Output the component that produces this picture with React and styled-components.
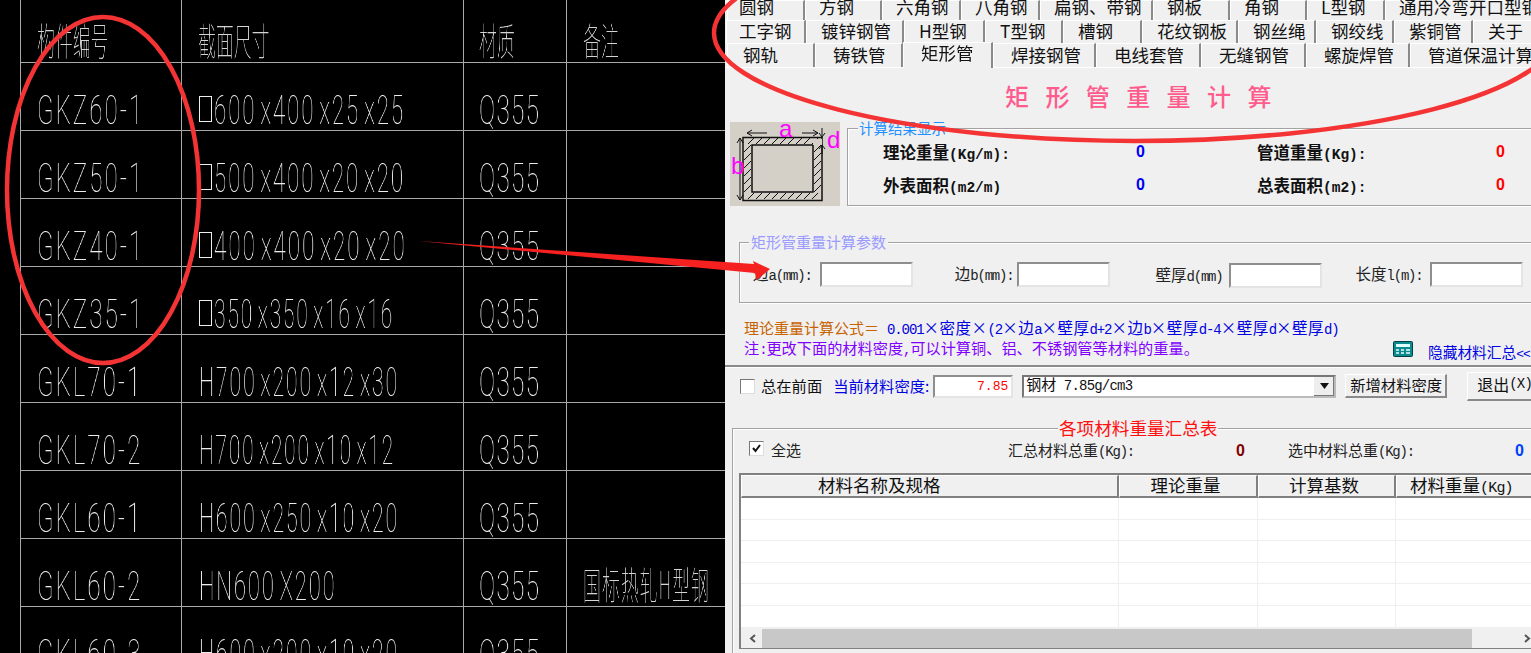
import React from "react";
import styled, { createGlobalStyle } from "styled-components";

const CJK = '"Noto Sans CJK SC", sans-serif';

const Global = createGlobalStyle`
  html, body { margin: 0; padding: 0; background: #000; }
  body { width: 1531px; height: 653px; overflow: hidden; font-family: ${CJK}; }
`;

const Page = styled.div`
  position: relative;
  display: flex;
  width: 1531px;
  height: 653px;
  overflow: hidden;
`;

/* ---------- CAD drawing table ---------- */
const Sheet = styled.div`
  flex: none;
  width: 725px;
  height: 653px;
  box-sizing: border-box;
  padding-left: 20px;
  background: #000;
  overflow: hidden;
  display: grid;
  grid-template-columns: 161px 282px 103px 159px;
  grid-auto-rows: 68px;
  grid-template-rows: 63px;
  align-content: start;
`;
const Cell = styled.div`
  box-sizing: border-box;
  border-left: 1px solid #a8a8a8;
  border-bottom: 1px solid #a8a8a8;
  padding-left: ${(p) => p.$pad}px;
  display: flex;
  align-items: flex-end;
  white-space: nowrap;
  min-width: 0;
`;
const HeadText = styled.span`
  display: block;
  font-family: ${CJK};
  font-weight: 100;
  font-size: 38px;
  line-height: 40px;
  letter-spacing: ${(p) => p.$ls ?? 0}px;
  color: #d4d4d4;
  margin-bottom: 3px;
  transform: scaleX(0.47);
  transform-origin: left center;
  will-change: transform;
`;
const CadText = styled.span`
  display: block;
  font-family: Roboto, "Noto Sans CJK SC", sans-serif;
  font-weight: 100;
  font-size: 40px;
  line-height: 36px;
  letter-spacing: ${(p) => p.$ls ?? 3.5}px;
  word-spacing: -6px;
  color: #ececec;
  margin-bottom: 1px;
  transform: scaleX(${(p) => p.$sx ?? 0.6});
  transform-origin: left center;
  will-change: transform;
`;
const SectionWrap = styled.span`
  display: flex;
  align-items: flex-end;
`;
const SquareMark = styled.span`
  flex: none;
  width: 11px;
  height: 24px;
  border: 1px solid #eee;
  margin: 0 2px 8px 0;
`;

/* ---------- Dialog ---------- */
const Dialog = styled.div`
  flex: none;
  width: 806px;
  height: 653px;
  background: #f0f0f0;
  overflow: hidden;
  display: flex;
  flex-direction: column;
  color: #000;
`;
const TabStrip = styled.div`
  flex: none;
  height: 67px;
  display: flex;
  flex-direction: column;
  border-bottom: 1px solid #fff;
`;
const TabRow = styled.div`
  flex: none;
  height: ${(p) => p.$h}px;
  display: flex;
  padding-left: ${(p) => p.$start}px;
  align-items: flex-end;
`;
const Tab = styled.div`
  flex: none;
  box-sizing: border-box;
  width: ${(p) => p.$w}px;
  height: ${(p) => (p.$active ? "calc(100% + 2px)" : "100%")};
  margin-bottom: ${(p) => (p.$active ? "-1px" : "0")};
  padding-left: ${(p) => p.$pad}px;
  padding-bottom: ${(p) => (p.$active ? 0 : p.$pb)}px;
  border-top: 1px solid #fff;
  border-left: 1px solid #fff;
  border-right: 2px solid #8a8a8a;
  font-size: 17.5px;
  line-height: ${(p) => (p.$active ? 20 : 22)}px;
  white-space: nowrap;
  color: #111;
  position: relative;
  z-index: ${(p) => (p.$active ? 1 : 0)};
  background: #f0f0f0;
  display: flex;
  align-items: ${(p) => (p.$active ? "flex-start" : "flex-end")};
  font-family: ${CJK};
  &:first-child { padding-left: ${(p) => p.$pad - 2}px; }
`;
const Title = styled.div`
  flex: none;
  height: 54px;
  padding-left: 280px;
  box-sizing: border-box;
  display: flex;
  align-items: center;
  font-family: ${CJK};
  font-size: 24px;
  font-weight: 500;
  letter-spacing: 16.4px;
  color: #ff5c8d;
`;
const ResultRow = styled.div`
  flex: none;
  height: 84px;
  display: flex;
  padding-left: 5px;
  gap: 7px;
`;
const Diagram = styled.svg`
  flex: none;
  width: 110px;
  height: 84px;
`;
const Group = styled.div`
  position: relative;
  box-sizing: border-box;
  border: 1px solid #a2a2a2;
  box-shadow: inset 1px 1px 0 #fff, 1px 1px 0 #fff;
`;
const ResultGroup = styled(Group)`
  flex: none;
  width: 720px;
  height: 78px;
  margin-top: 6px;
  display: grid;
  grid-template-columns: 374px 1fr;
  grid-template-rows: 33px 33px;
  padding: 6px 0 0 35px;
`;
const Legend = styled.span`
  position: absolute;
  top: -11px;
  left: ${(p) => p.$left}px;
  padding: 0 ${(p) => p.$px ?? 1}px;
  background: #f0f0f0;
  font-family: ${CJK};
  font-size: ${(p) => p.$size}px;
  line-height: 20px;
  white-space: nowrap;
  color: ${(p) => p.$color};
`;
const Lat = styled.span`
  font-family: "Liberation Mono", monospace;
  font-size: ${(p) => p.$size}px;
  letter-spacing: ${(p) => p.$ls}px;
`;
const Stat = styled.div`
  display: flex;
  align-items: center;
  font-family: ${CJK};
  font-size: 16.5px;
  font-weight: 700;
  color: #111;
  white-space: nowrap;
`;
const StatLabel = styled.span`
  flex: none;
  width: ${(p) => p.$w}px;
`;
const StatValue = styled.span`
  font-family: "Liberation Sans", sans-serif;
  font-size: 16px;
  color: ${(p) => p.$color};
`;
const ParamGroup = styled(Group)`
  flex: none;
  width: 800px;
  height: 61px;
  margin: 36px 0 0 14px;
  padding: 19px 0 0 13px;
  display: flex;
  align-items: flex-start;
`;
const Field = styled.div`
  flex: none;
  display: flex;
  align-items: center;
  gap: ${(p) => p.$gap}px;
  margin-left: ${(p) => p.$ml}px;
  margin-top: ${(p) => p.$mt ?? 0}px;
`;
const FieldLabel = styled.span`
  font-family: ${CJK};
  font-size: 15.5px;
  line-height: 22px;
  color: #222;
  white-space: nowrap;
`;
const Sunken = styled.div`
  box-sizing: border-box;
  background: #fff;
  border: 2px solid;
  border-color: #8e8e8e #e4e4e4 #e4e4e4 #8e8e8e;
`;
const ParamInput = styled(Sunken)`
  width: 93px;
  height: 25px;
`;
const Notes = styled.div`
  flex: none;
  height: 62px;
  padding: 14px 0 0 19px;
  box-sizing: border-box;
  position: relative;
  font-family: ${CJK};
  font-size: 15.5px;
  white-space: nowrap;
`;
const NoteLine = styled.div`
  height: 20px;
  line-height: 20px;
  color: ${(p) => p.$color};
  font-size: ${(p) => p.$size ?? 15.5}px;
`;
const Orange = styled.span`
  color: #c86400;
  font-size: 15px;
  margin-right: 8px;
`;
const Formula = styled.span`
  letter-spacing: 0.5px;
`;
const HideLink = styled.div`
  position: absolute;
  left: 668px;
  top: 38px;
  display: flex;
  align-items: flex-start;
  gap: 15px;
  color: #0000e0;
  font-size: 14.7px;
  line-height: 21px;
  font-family: ${CJK};
`;
const CalcIcon = styled.svg`
  flex: none;
  width: 20px;
  height: 16px;
`;
const Toolbar = styled.div`
  flex: none;
  height: 40px;
  border-top: 2px solid #8a8a8a;
  box-shadow: inset 0 1px 0 #fff;
  box-sizing: border-box;
  padding: 0 0 0 15px;
  display: flex;
  align-items: center;
  font-size: 15.3px;
  font-family: ${CJK};
  white-space: nowrap;
`;
const CheckBox = styled.span`
  flex: none;
  box-sizing: border-box;
  width: ${(p) => p.$size}px;
  height: ${(p) => p.$size}px;
  background: #fff;
  border: 1px solid;
  border-color: #777 #ddd #ddd #777;
  display: flex;
  align-items: center;
  justify-content: center;
`;
const ToolLabel = styled.span`
  color: ${(p) => p.$color ?? "#111"};
  margin-left: ${(p) => p.$ml}px;
  padding-bottom: 2px;
  font-family: ${CJK};
  font-size: 15.3px;
`;
const Density = styled(Sunken)`
  flex: none;
  width: 80px;
  height: 23px;
  margin-left: 4px;
  padding-right: 3px;
  text-align: right;
  color: #f00;
  font-family: "Liberation Mono", monospace;
  font-size: 13px;
  line-height: 19px;
`;
const Select = styled(Sunken)`
  flex: none;
  width: 314px;
  height: 23px;
  margin-left: 9px;
  display: flex;
  align-items: center;
  justify-content: space-between;
  font-family: ${CJK};
  font-size: 15px;
  color: #111;
  padding-left: 2px;
  border-color: #777 #bbb #bbb #777;
`;
const SelectText = styled.span`
  line-height: 18px;
  padding-bottom: 3px;
`;
const SelectArrow = styled.span`
  flex: none;
  width: 20px;
  height: 19px;
  background: #eee;
  border-left: 1px solid #fff;
  box-shadow: inset -1px -1px 0 #777;
  display: flex;
  align-items: center;
  justify-content: center;
`;
const Button = styled.div`
  flex: none;
  box-sizing: border-box;
  width: ${(p) => p.$w}px;
  height: ${(p) => p.$h}px;
  margin-left: ${(p) => p.$ml}px;
  background: #f0f0f0;
  border-top: 1px solid #fff;
  border-left: 1px solid #fff;
  border-right: 2px solid #8a8a8a;
  border-bottom: 2px solid #8a8a8a;
  display: flex;
  align-items: center;
  padding: 0 0 3px ${(p) => p.$pad}px;
  font-family: ${CJK};
  font-size: ${(p) => p.$size}px;
  color: #111;
  white-space: nowrap;
`;
const SummaryGroup = styled(Group)`
  flex: none;
  width: 830px;
  height: 240px;
  margin: 23px 0 0 7px;
  padding-top: 12px;
`;
const SummaryTop = styled.div`
  height: 32px;
  padding-left: 16px;
  display: flex;
  align-items: flex-start;
  font-family: ${CJK};
  font-size: 15px;
  white-space: nowrap;
`;
const SummaryLabel = styled.span`
  margin-left: ${(p) => p.$ml}px;
  line-height: 18px;
  color: #222;
`;
const SummaryValue = styled.span`
  margin-left: ${(p) => p.$ml}px;
  line-height: 19px;
  font-family: "Liberation Sans", sans-serif;
  font-size: 16px;
  font-weight: 700;
  color: ${(p) => p.$color};
`;
const Table = styled.div`
  margin-left: 6px;
  width: 815px;
  height: 176px;
  box-sizing: border-box;
  border-top: 2px solid #808080;
  border-left: 2px solid #808080;
  border-bottom: 1px solid #808080;
  background: #fff;
  display: flex;
  flex-direction: column;
`;
const TableGrid = styled.div`
  display: grid;
  grid-template-columns: ${(p) => p.$cols};
`;
const HeaderCell = styled.div`
  box-sizing: border-box;
  height: 23px;
  background: #f0f0f0;
  border-bottom: 2px solid #808080;
  border-right: 2px solid #808080;
  border-left: 1px solid #fff;
  border-top: 1px solid #fff;
  text-align: ${(p) => (p.$pl ? "left" : "center")};
  padding-left: ${(p) => p.$pl ?? 0}px;
  padding-right: ${(p) => (p.$pl ? 0 : 5)}px;
  font-family: ${CJK};
  font-size: 17.5px;
  line-height: 17px;
  color: #111;
  white-space: nowrap;
`;
const BodyCell = styled.div`
  box-sizing: border-box;
  height: 21.6px;
  border-bottom: 1px solid #efefef;
  border-right: 1px solid #efefef;
`;
const ScrollBar = styled.div`
  flex: none;
  margin-top: auto;
  height: 20px;
  background: #f0f0f0;
  display: flex;
  align-items: center;
  padding-left: 21px;
  position: relative;
`;
const ScrollThumb = styled.div`
  flex: none;
  width: 710px;
  height: 19px;
  background: #c8c8c8;
`;
const ScrollArrow = styled.svg`
  position: absolute;
  left: ${(p) => p.$left}px;
  top: 6px;
  width: 8px;
  height: 9px;
`;
const Overlay = styled.svg`
  position: absolute;
  inset: 0;
  width: 1531px;
  height: 653px;
  pointer-events: none;
`;

/* Chinese text with its Latin runs set in the tall, tightly spaced mono face */
function Mixed({ text, size = 14, ls = -1.2 }) {
  return text.split(/([\x20-\x7e]+)/).map((part, i) =>
    /^[\x20-\x7e]+$/.test(part) ? <Lat key={i} $size={size} $ls={ls}>{part}</Lat> : part
  );
}

/* ---------- data ---------- */
const tabRows = [
  { h: 20, start: 2, pad: 13, pb: 2, tabs: [["圆钢", 78], ["方钢", 77], ["六角钢", 79], ["八角钢", 79], ["扁钢、带钢", 113], ["钢板", 77], ["角钢", 77], ["L型钢", 78], ["通用冷弯开口型钢", 200]] },
  { h: 23, start: 1, pad: 14, pb: 1, tabs: [["工字钢", 80], ["镀锌钢管", 98], ["H型钢", 81], ["T型钢", 78], ["槽钢", 79], ["花纹钢板", 96], ["钢丝绳", 78], ["钢绞线", 78], ["紫铜管", 79], ["关于", 70]] },
  { h: 24, start: 2, pad: 17, pb: 1, tabs: [["钢轨", 88], ["铸铁管", 88], ["矩形管", 90, true], ["焊接钢管", 103], ["电线套管", 105], ["无缝钢管", 105], ["螺旋焊管", 104], ["管道保温计算", 140]] },
];

const cadRows = [
  ["GKZ60-1", "600 x400 x25 x25", 0.557, true, ""],
  ["GKZ50-1", "500 x400 x20 x20", 0.557, true, ""],
  ["GKZ40-1", "400 x400 x20 x20", 0.562, true, ""],
  ["GKZ35-1", "350 x350 x16 x16", 0.525, true, ""],
  ["GKL70-1", "H700 x200 x12 x30", 0.534, false, ""],
  ["GKL70-2", "H700 x200 x10 x12", 0.523, false, ""],
  ["GKL60-1", "H600 x250 x10 x20", 0.534, false, ""],
  ["GKL60-2", "HN600 X200", 0.55, false, "国标热轧H型钢"],
  ["GKL60-3", "H600 x200 x10 x20", 0.534, false, ""],
];

const columns = "378px 139px 138px 158px";
const headers = [["材料名称及规格", 76], ["理论重量"], ["计算基数"], ["材料重量(Kg)", 13]];

function SectionDiagram() {
  const top = [];
  for (let i = 0; i < 9; i++) top.push(<path key={"t" + i} d={`M${18 + i * 8} 22 l6 -6`} />);
  const bottom = [];
  for (let i = 0; i < 9; i++) bottom.push(<path key={"b" + i} d={`M${18 + i * 8} 77 l6 -6`} />);
  const left = [];
  const right = [];
  for (let i = 0; i < 6; i++) {
    left.push(<path key={"l" + i} d={`M14 ${30 + i * 8} l7 -7`} />);
    right.push(<path key={"r" + i} d={`M84 ${30 + i * 8} l7 -7`} />);
  }
  return (
    <Diagram viewBox="0 0 110 84">
      <rect width="110" height="84" fill="#d4d0c8" />
      <g fill="none" stroke="#111" strokeWidth="1">
        {top}{bottom}{left}{right}
        <path d="M17 11h20M17 11l5-3M17 11l5 3M72 11h16M88 11l-5-3M88 11l-5 3" />
        <path d="M10 16v62M10 16l-3 5M10 16l3 5M10 78l-3-5M10 78l3-5" />
        <path d="M92 6v9M92 15l-3-4M92 15l3-4M92 22v10M92 23l-3 4M92 23l3 4" />
      </g>
      <rect x="13" y="15.500" width="79" height="63" fill="none" stroke="#111" strokeWidth="1.500" />
      <rect x="22" y="23" width="61" height="47" fill="#d4d0c8" stroke="#111" strokeWidth="1.500" />
      <rect x="83" y="17" width="9" height="6" fill="#d4d0c8" />
      <g fill="#ff00ff" fontFamily="Liberation Sans, sans-serif" fontSize="24">
        <text x="49" y="15">a</text>
        <text x="1" y="52">b</text>
        <text x="97" y="26">d</text>
      </g>
    </Diagram>
  );
}

const Tick = () => (
  <svg width="11" height="11" viewBox="0 0 11 11">
    <path d="M2 5l2.500 3L9 2" fill="none" stroke="#111" strokeWidth="2" />
  </svg>
);

export default function App() {
  return (
    <Page>
      <Global />
      <Sheet>
        <Cell $pad={16}><HeadText>构件编号</HeadText></Cell>
        <Cell $pad={16}><HeadText>截面尺寸</HeadText></Cell>
        <Cell $pad={15}><HeadText>材质</HeadText></Cell>
        <Cell $pad={16}><HeadText>备注</HeadText></Cell>
        {cadRows.map(([id, size, sx, square, note]) => (
          <React.Fragment key={id}>
            <Cell $pad={16}><CadText>{id}</CadText></Cell>
            <Cell $pad={17}>
              <SectionWrap>
                {square && <SquareMark />}
                <CadText $sx={sx}>{size}</CadText>
              </SectionWrap>
            </Cell>
            <Cell $pad={15}><CadText $ls={2.5}>Q355</CadText></Cell>
            <Cell $pad={16}>{note && <HeadText $ls={2.2}>{note}</HeadText>}</Cell>
          </React.Fragment>
        ))}
      </Sheet>

      <Dialog>
        <TabStrip>
          {tabRows.map((row, i) => (
            <TabRow key={i} $h={row.h} $start={row.start}>
              {row.tabs.map(([label, w, active]) => (
                <Tab key={label} $w={w} $pad={row.pad} $pb={row.pb} $active={active}>{label}</Tab>
              ))}
            </TabRow>
          ))}
        </TabStrip>
        <Title>矩形管重量计算</Title>
        <ResultRow>
          <SectionDiagram />
          <ResultGroup>
            <Legend $left={10} $size={14.5} $color="#1e90ff">计算结果显示</Legend>
            <Stat><StatLabel $w={253}><Mixed text="理论重量(Kg/m):" size={14.5} ls={0} /></StatLabel><StatValue $color="#0000f0">0</StatValue></Stat>
            <Stat><StatLabel $w={239}><Mixed text="管道重量(Kg):" size={14.5} ls={0} /></StatLabel><StatValue $color="#f00">0</StatValue></Stat>
            <Stat><StatLabel $w={253}><Mixed text="外表面积(m2/m)" size={14.5} ls={0} /></StatLabel><StatValue $color="#0000f0">0</StatValue></Stat>
            <Stat><StatLabel $w={239}><Mixed text="总表面积(m2):" size={14.5} ls={0} /></StatLabel><StatValue $color="#f00">0</StatValue></Stat>
          </ResultGroup>
        </ResultRow>
        <ParamGroup>
          <Legend $left={9} $px={2} $size={15} $color="#9a9aff">矩形管重量计算参数</Legend>
          <Field $gap={8} $ml={0}><FieldLabel><Mixed text="边a(mm):" /></FieldLabel><ParamInput /></Field>
          <Field $gap={4} $ml={42}><FieldLabel><Mixed text="边b(mm):" /></FieldLabel><ParamInput /></Field>
          <Field $gap={6} $ml={45} $mt={1}><FieldLabel><Mixed text="壁厚d(mm)" /></FieldLabel><ParamInput /></Field>
          <Field $gap={7} $ml={34}><FieldLabel><Mixed text="长度l(m):" /></FieldLabel><ParamInput /></Field>
        </ParamGroup>
        <Notes>
          <NoteLine $color="#0000e0"><Orange>理论重量计算公式＝</Orange><Formula><Mixed text="0.001×密度×(2×边a×壁厚d+2×边b×壁厚d-4×壁厚d×壁厚d)" size={14} ls={-1.1} /></Formula></NoteLine>
          <NoteLine $color="#8000ff" $size={15.2}><Mixed text="注:更改下面的材料密度,可以计算铜、铝、不锈钢管等材料的重量。" /></NoteLine>
          <HideLink>
            <CalcIcon viewBox="0 0 20 16">
              <rect x="0.500" y="0.500" width="19" height="15" rx="1" fill="#0b8a90" stroke="#063f44" />
              <rect x="3" y="3" width="14" height="3" fill="#dff" />
              <path d="M3 9h3M8 9h3M13 9h4M3 12h3M8 12h3M13 12h4" stroke="#eafffa" strokeWidth="1.500" />
            </CalcIcon>
            <span>隐藏材料汇总<Lat $size={13} $ls={-1}>&lt;&lt;</Lat></span>
          </HideLink>
        </Notes>
        <Toolbar>
          <CheckBox $size={15} />
          <ToolLabel $ml={6}>总在前面</ToolLabel>
          <ToolLabel $ml={11} $color="#0000e0">当前材料密度:</ToolLabel>
          <Density>7.85</Density>
          <Select>
            <SelectText><Mixed text="钢材 7.85g/cm3" size={14} ls={-0.8} /></SelectText>
            <SelectArrow>
              <svg width="9" height="6" viewBox="0 0 9 6"><path d="M0 0h9L4.500 6z" fill="#111" /></svg>
            </SelectArrow>
          </Select>
          <Button $w={102} $h={24} $ml={9} $pad={4} $size={15.3}>新增材料密度</Button>
          <Button $w={80} $h={29} $ml={20} $pad={9} $size={16}><Mixed text="退出(X)" size={14} ls={-0.8} /></Button>
        </Toolbar>
        <SummaryGroup>
          <Legend $left={325} $size={17.6} $color="#ff1010">各项材料重量汇总表</Legend>
          <SummaryTop>
            <CheckBox $size={15}><Tick /></CheckBox>
            <SummaryLabel $ml={7}>全选</SummaryLabel>
            <SummaryLabel $ml={207}><Mixed text="汇总材料总重(Kg):" /></SummaryLabel>
            <SummaryValue $ml={102} $color="#800000">0</SummaryValue>
            <SummaryLabel $ml={43}><Mixed text="选中材料总重(Kg):" /></SummaryLabel>
            <SummaryValue $ml={101} $color="#0040ff">0</SummaryValue>
          </SummaryTop>
          <Table>
            <TableGrid $cols={columns}>
              {headers.map(([h, pl]) => <HeaderCell key={h} $pl={pl}><Mixed text={h} size={15} ls={-0.8} /></HeaderCell>)}
              {Array.from({ length: 24 }, (_, i) => <BodyCell key={i} />)}
            </TableGrid>
            <ScrollBar>
              <ScrollArrow $left={8} viewBox="0 0 8 9"><path d="M6 1L2 4.500 6 8" fill="none" stroke="#555" strokeWidth="2" /></ScrollArrow>
              <ScrollThumb />
              <ScrollArrow $left={782} viewBox="0 0 8 9"><path d="M2 1l4 3.500L2 8" fill="none" stroke="#555" strokeWidth="2" /></ScrollArrow>
            </ScrollBar>
          </Table>
        </SummaryGroup>
      </Dialog>

      <Overlay viewBox="0 0 1531 653">
        <ellipse cx="103" cy="190" rx="96" ry="173" fill="none" stroke="#f43434" strokeWidth="4.500" />
        <ellipse cx="1135" cy="33" rx="421" ry="108" fill="none" stroke="#f43434" strokeWidth="4.500" />
        <polygon points="418,241 754,264 753,261 770,269 757,280 755,273" fill="#f52020" />
      </Overlay>
    </Page>
  );
}
